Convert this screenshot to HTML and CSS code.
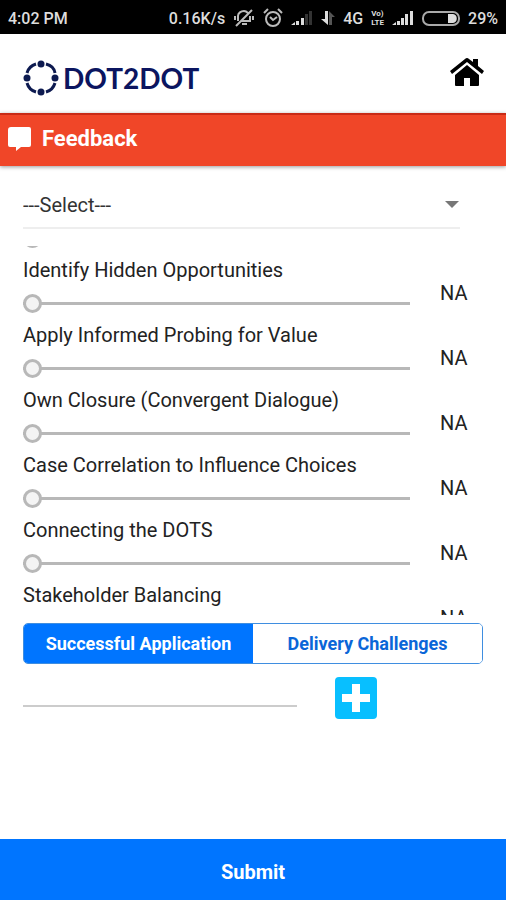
FILE: index.html
```html
<!DOCTYPE html>
<html lang="en">
<head>
  <meta charset="UTF-8">
  <meta name="viewport" content="width=device-width, initial-scale=1">
  <title>Feedback - DOT2DOT</title>
  <link rel="stylesheet" href="styles.css">
</head>
<body>
  <div class="status-bar">
    <span class="time">4:02 PM</span>
    <span>0.16K/s</span>
    <svg class="muted" width="22" height="20" viewBox="0 0 22 20" fill="none" stroke="#bbb" stroke-width="2">
      <path d="M5 13V8c0-3 3-5 6-5 2 0 3 1 4 2M17 8v5H9M9 16h5M3 18L19 2M2 8v4M20 8v4"/>
    </svg>
    <svg class="alarm" width="20" height="20" viewBox="0 0 20 20" fill="none" stroke="#bbb" stroke-width="2">
      <circle cx="10" cy="11" r="7"/>
      <path d="M7 9l3 3 4-3M1 5l4-4M19 5l-4-4"/>
    </svg>
    <svg class="signal" width="22" height="16" viewBox="0 0 22 16">
      <path fill="#ddd" d="M0 15l4-3v3zM5 11h3v4H5zM10 8h3v7h-3z"/>
      <path fill="#333" d="M14 4h3v11h-3zM18 1h3v14h-3z"/>
    </svg>
    <svg class="arrows" width="14" height="16" viewBox="0 0 14 16">
      <path fill="#ddd" d="M4 1h3v14L0 9h4z"/>
      <path fill="#555" d="M8 15V1l6 6h-3v8z"/>
    </svg>
    <span>4G</span>
    <span class="volte"><span>Vo)</span><span>LTE</span></span>
    <svg class="signal" width="22" height="16" viewBox="0 0 22 16">
      <path fill="#ddd" d="M0 15l4-3v3zM5 11h3v4H5zM9 8h3v7H9zM13 4h3v11h-3zM18 1h3v14h-3z"/>
    </svg>
    <svg class="battery" width="38" height="15" viewBox="0 0 38 15">
      <rect x="1" y="1" width="36" height="13" rx="6" fill="none" stroke="#aaa" stroke-width="2"/>
      <path fill="#ddd" d="M26 3h5c5 0 5 9 0 9h-5z"/>
    </svg>
    <span>29%</span>
  </div>

  <header class="header">
    <div class="logo">
      <svg width="36" height="36" viewBox="0 0 36 36" fill="none" stroke="#0d1a50" stroke-width="3">
        <path d="M23 4Q31 6 32 13M32 23Q30 30 23 32M13 32Q6 30 4 23M4 13Q6 6 13 4"/>
        <g fill="#0d1a50" stroke="none">
          <circle cx="18" cy="4" r="3.500"/><circle cx="32" cy="18" r="3.500"/>
          <circle cx="18" cy="32" r="3.500"/><circle cx="4" cy="18" r="3.500"/>
        </g>
      </svg>
      <span class="logo-text">DOT2DOT</span>
    </div>
    <a class="home" href="#" aria-label="Home">
      <svg width="36" height="30" viewBox="0 0 36 30">
        <path fill="#000" d="M6 18L18 8l12 10v10q0 1-1 1h-8v-8h-6v8H7q-1 0-1-1z"/>
        <path fill="#000" d="M1 14L16 2q2-2 4 0l4 3V2h5v7l6 5-2 3L18 5 3 17z"/>
      </svg>
    </a>
  </header>

  <div class="title-bar">
    <svg width="24" height="24" viewBox="0 0 24 24">
      <path fill="#fff" d="M3 0h18q2 0 2 2v16q0 2-2 2h-8l-5 4v-4H2q-2 0-2-2V3q0-3 3-3z"/>
    </svg>
    <h1>Feedback</h1>
  </div>

  <form class="feedback">
    <div class="select-box">
      <select aria-label="Select">
        <option>---Select---</option>
      </select>
    </div>

    <div class="skills">
      <ul class="skill-list">
        <li class="skill">
          <div class="skill-main">
            <input type="range" min="0" max="5" value="0" aria-label="Rating">
          </div>
        </li>
        <li class="skill">
          <div class="skill-main">
            <label for="skill-1">Identify Hidden Opportunities</label>
            <input type="range" id="skill-1" min="0" max="5" value="0">
          </div>
          <output for="skill-1">NA</output>
        </li>
        <li class="skill">
          <div class="skill-main">
            <label for="skill-2">Apply Informed Probing for Value</label>
            <input type="range" id="skill-2" min="0" max="5" value="0">
          </div>
          <output for="skill-2">NA</output>
        </li>
        <li class="skill">
          <div class="skill-main">
            <label for="skill-3">Own Closure (Convergent Dialogue)</label>
            <input type="range" id="skill-3" min="0" max="5" value="0">
          </div>
          <output for="skill-3">NA</output>
        </li>
        <li class="skill">
          <div class="skill-main">
            <label for="skill-4">Case Correlation to Influence Choices</label>
            <input type="range" id="skill-4" min="0" max="5" value="0">
          </div>
          <output for="skill-4">NA</output>
        </li>
        <li class="skill">
          <div class="skill-main">
            <label for="skill-5">Connecting the DOTS</label>
            <input type="range" id="skill-5" min="0" max="5" value="0">
          </div>
          <output for="skill-5">NA</output>
        </li>
        <li class="skill">
          <div class="skill-main">
            <label for="skill-6">Stakeholder Balancing</label>
            <input type="range" id="skill-6" min="0" max="5" value="0">
          </div>
          <output for="skill-6">NA</output>
        </li>
      </ul>
    </div>

    <div class="tabs">
      <button type="button" class="tab active">Successful Application</button>
      <button type="button" class="tab">Delivery Challenges</button>
    </div>

    <div class="add-row">
      <input type="text" aria-label="Successful Application">
      <button type="button" class="add-btn" aria-label="Add">
        <svg width="28" height="28" viewBox="0 0 28 28">
          <path fill="#fff" d="M10 0h8v10h10v8H18v10h-8V18H0v-8h10z"/>
        </svg>
      </button>
    </div>

    <button type="submit" class="submit-btn">Submit</button>
  </form>
</body>
</html>
```
FILE: styles.css
```css
* {
  box-sizing: border-box;
}
body {
  margin: 0;
  min-height: 100vh;
  display: flex;
  flex-direction: column;
  background-color: #fff;
  color: #222;
  font-family: Roboto, sans-serif;
  font-size: 20px;
}
button,
input,
select {
  font-family: inherit;
  font-size: inherit;
}

/* Status bar */
.status-bar {
  display: flex;
  align-items: center;
  gap: 8px;
  height: 34px;
  padding: 2px 8px 0;
  background-color: #000;
  color: #ddd;
  font-size: 16px;
  font-weight: 500;
}
.time {
  margin-right: auto;
}
.volte {
  display: flex;
  flex-direction: column;
  font-size: 8px;
  font-weight: 700;
  line-height: 9px;
}

/* Header */
.header {
  display: flex;
  align-items: center;
  justify-content: space-between;
  height: 79px;
  padding: 0 21px 0 23px;
}
.logo {
  display: flex;
  align-items: center;
  gap: 4px;
  padding-top: 8px;
}
.logo-text {
  color: #0b1560;
  font-family: Lato, sans-serif;
  font-size: 28px;
  font-weight: 700;
  line-height: 36px;
}
.home svg {
  display: block;
  margin-bottom: 4px;
}
.title-bar {
  display: flex;
  align-items: center;
  gap: 10px;
  height: 53px;
  padding: 0 8px 4px;
  border-top: 2px solid #c92b16;
  background-color: #f04628;
  box-shadow: 0 1px 4px rgba(0,0,0,0.4);
  color: #fff;
}
.title-bar h1 {
  margin: 0;
  font-size: 22px;
  line-height: 26px;
}

/* Form */
.feedback {
  flex: 1;
  display: flex;
  flex-direction: column;
}
.select-box {
  display: flex;
  align-items: center;
  margin: 16px 46px 0 23px;
  border-bottom: 2px solid #eee;
}
.select-box::after {
  content: "";
  margin-right: 1px;
  border: 7px solid transparent;
  border-top-color: #777;
  border-bottom: 0;
  pointer-events: none;
}
.select-box select {
  flex: 1;
  height: 45px;
  padding: 0;
  border: 0;
  background: none;
  color: #333;
  appearance: none;
}
.skills {
  height: 369px;
  margin-top: 17px;
  padding: 0 39px 0 23px;
  overflow: hidden;
}
/* List is scrolled past the first slider */
.skill-list {
  margin: -52px 0 0;
  padding: 0;
  list-style: none;
}
.skill {
  display: flex;
  align-items: flex-start;
  gap: 30px;
  height: 65px;
}
.skill-main {
  flex: 1;
  display: flex;
  flex-direction: column;
  gap: 12px;
}
.skill:first-child {
  align-items: flex-end;
  padding: 0 57px 11px 0;
}
.skill label {
  line-height: 22px;
}
.skill output {
  width: 27px;
  padding-top: 22px;
  line-height: 24px;
}
input[type="range"] {
  width: 100%;
  height: 20px;
  margin: 0;
  background: none;
  appearance: none;
}
input[type="range"]::-webkit-slider-runnable-track {
  height: 3px;
  background-color: #b8b8b8;
}
input[type="range"]::-webkit-slider-thumb {
  width: 19px;
  height: 19px;
  margin-top: -8px;
  border: 3px solid #b8b8b8;
  border-radius: 50%;
  background-color: #f4f4f4;
  appearance: none;
}
.tabs {
  display: flex;
  height: 41px;
  margin: 8px 23px 0;
  border: 1px solid #3f8ee0;
  border-radius: 5px;
  overflow: hidden;
}
.tab {
  flex: 1;
  padding: 0;
  border: 0;
  background-color: #fff;
  color: #0a66d8;
  font-size: 18px;
  font-weight: 700;
}
.tab.active {
  background-color: #0075ff;
  color: #fff;
}
.add-row {
  display: flex;
  align-items: flex-start;
  gap: 38px;
  margin: 13px 129px 24px 23px;
}
.add-row input {
  flex: 1;
  min-width: 0;
  height: 30px;
  padding: 0;
  border: 0;
  border-bottom: 2px solid #ccc;
  background: none;
}
.add-btn {
  display: flex;
  align-items: center;
  justify-content: center;
  width: 42px;
  height: 42px;
  padding: 0;
  border: 0;
  border-radius: 4px;
  background-color: #08bfff;
}
.submit-btn {
  height: 61px;
  margin-top: auto;
  padding: 4px 0 0;
  border: 0;
  background-color: #0075ff;
  color: #fff;
  font-weight: 700;
}
```
